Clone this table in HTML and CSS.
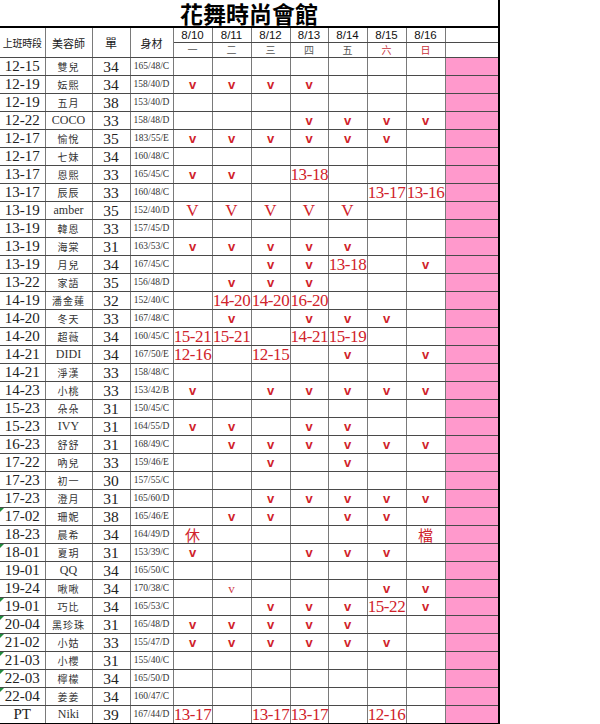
FILE: index.html
```html
<!DOCTYPE html>
<html lang="zh-Hant">
<head>
<meta charset="utf-8">
<title>花舞時尚會館</title>
<link rel="stylesheet" href="styles.css">
</head>
<body>
<table class="sheet">
  <colgroup>
    <col class="w-time"><col class="w-name"><col class="w-cup"><col class="w-size">
    <col class="w-day"><col class="w-day"><col class="w-day"><col class="w-day8">
    <col class="w-day"><col class="w-day"><col class="w-day"><col class="w-pink">
  </colgroup>
  <thead>
    <tr class="title-row"><th colspan="12" class="title">花舞時尚會館</th></tr>
    <tr class="hd1">
      <th rowspan="2" class="h-time">上班時段</th>
      <th rowspan="2" class="h-name">美容師</th>
      <th rowspan="2" class="h-cup">單</th>
      <th rowspan="2" class="h-size">身材</th>
      <th class="date">8/10</th><th class="date">8/11</th><th class="date">8/12</th><th class="date">8/13</th>
      <th class="date">8/14</th><th class="date">8/15</th><th class="date">8/16</th><th class="blank last"></th>
    </tr>
    <tr class="hd2">
      <th class="wd">一</th><th class="wd">二</th><th class="wd">三</th><th class="wd">四</th>
      <th class="wd">五</th><th class="wd red">六</th><th class="wd red">日</th><th class="blank last"></th>
    </tr>
  </thead>
  <tbody>
    <tr><td class="t">12-15</td><td class="n">雙兒</td><td class="c">34</td><td class="s">165/48/C</td><td></td><td></td><td></td><td></td><td></td><td></td><td></td><td class="p"></td></tr>
    <tr><td class="t">12-19</td><td class="n">妘熙</td><td class="c">34</td><td class="s">158/40/D</td><td><span class="v">v</span></td><td><span class="v">v</span></td><td><span class="v">v</span></td><td><span class="v">v</span></td><td></td><td></td><td></td><td class="p"></td></tr>
    <tr><td class="t">12-19</td><td class="n">五月</td><td class="c">38</td><td class="s">153/40/D</td><td></td><td></td><td></td><td></td><td></td><td></td><td></td><td class="p"></td></tr>
    <tr><td class="t">12-22</td><td class="n lat">COCO</td><td class="c">33</td><td class="s">158/48/D</td><td></td><td></td><td></td><td><span class="v">v</span></td><td><span class="v">v</span></td><td><span class="v">v</span></td><td><span class="v">v</span></td><td class="p"></td></tr>
    <tr><td class="t">12-17</td><td class="n">愉悅</td><td class="c">35</td><td class="s">183/55/E</td><td><span class="v">v</span></td><td><span class="v">v</span></td><td><span class="v">v</span></td><td><span class="v">v</span></td><td><span class="v">v</span></td><td><span class="v">v</span></td><td></td><td class="p"></td></tr>
    <tr><td class="t">12-17</td><td class="n">七妹</td><td class="c">34</td><td class="s">160/48/C</td><td></td><td></td><td></td><td></td><td></td><td></td><td></td><td class="p"></td></tr>
    <tr><td class="t">13-17</td><td class="n">恩熙</td><td class="c">33</td><td class="s">165/45/C</td><td><span class="v">v</span></td><td><span class="v">v</span></td><td></td><td><span class="r">13-18</span></td><td></td><td></td><td></td><td class="p"></td></tr>
    <tr><td class="t">13-17</td><td class="n">辰辰</td><td class="c">33</td><td class="s">160/48/C</td><td></td><td></td><td></td><td></td><td></td><td><span class="r">13-17</span></td><td><span class="r">13-16</span></td><td class="p"></td></tr>
    <tr><td class="t">13-19</td><td class="n lat">amber</td><td class="c">35</td><td class="s">152/40/D</td><td><span class="bigv">V</span></td><td><span class="bigv">V</span></td><td><span class="bigv">V</span></td><td><span class="bigv">V</span></td><td><span class="bigv">V</span></td><td></td><td></td><td class="p"></td></tr>
    <tr><td class="t">13-19</td><td class="n">韓恩</td><td class="c">33</td><td class="s">157/45/D</td><td></td><td></td><td></td><td></td><td></td><td></td><td></td><td class="p"></td></tr>
    <tr><td class="t">13-19</td><td class="n">海棠</td><td class="c">31</td><td class="s">163/53/C</td><td><span class="v">v</span></td><td><span class="v">v</span></td><td><span class="v">v</span></td><td><span class="v">v</span></td><td><span class="v">v</span></td><td></td><td></td><td class="p"></td></tr>
    <tr><td class="t">13-19</td><td class="n">月兒</td><td class="c">34</td><td class="s">167/45/C</td><td></td><td></td><td><span class="v">v</span></td><td><span class="v">v</span></td><td><span class="r">13-18</span></td><td></td><td><span class="v">v</span></td><td class="p"></td></tr>
    <tr><td class="t">13-22</td><td class="n">家語</td><td class="c">35</td><td class="s">156/48/D</td><td></td><td><span class="v">v</span></td><td><span class="v">v</span></td><td><span class="v">v</span></td><td></td><td></td><td></td><td class="p"></td></tr>
    <tr><td class="t">14-19</td><td class="n">潘金蓮</td><td class="c">32</td><td class="s">152/40/C</td><td></td><td><span class="r">14-20</span></td><td><span class="r">14-20</span></td><td><span class="r">16-20</span></td><td></td><td></td><td></td><td class="p"></td></tr>
    <tr><td class="t">14-20</td><td class="n">冬天</td><td class="c">33</td><td class="s">167/48/C</td><td></td><td><span class="v">v</span></td><td></td><td><span class="v">v</span></td><td><span class="v">v</span></td><td><span class="v">v</span></td><td></td><td class="p"></td></tr>
    <tr><td class="t">14-20</td><td class="n">超薇</td><td class="c">34</td><td class="s">160/45/C</td><td><span class="r">15-21</span></td><td><span class="r">15-21</span></td><td></td><td><span class="r">14-21</span></td><td><span class="r">15-19</span></td><td></td><td></td><td class="p"></td></tr>
    <tr><td class="t">14-21</td><td class="n lat">DIDI</td><td class="c">34</td><td class="s">167/50/E</td><td><span class="r">12-16</span></td><td></td><td><span class="r">12-15</span></td><td></td><td><span class="v">v</span></td><td></td><td><span class="v">v</span></td><td class="p"></td></tr>
    <tr><td class="t">14-21</td><td class="n">淨漢</td><td class="c">33</td><td class="s">158/48/C</td><td></td><td></td><td></td><td></td><td></td><td></td><td></td><td class="p"></td></tr>
    <tr><td class="t">14-23</td><td class="n">小桃</td><td class="c">33</td><td class="s">153/42/B</td><td><span class="v">v</span></td><td></td><td><span class="v">v</span></td><td><span class="v">v</span></td><td><span class="v">v</span></td><td><span class="v">v</span></td><td><span class="v">v</span></td><td class="p"></td></tr>
    <tr><td class="t">15-23</td><td class="n">朵朵</td><td class="c">31</td><td class="s">150/45/C</td><td></td><td></td><td></td><td></td><td></td><td></td><td></td><td class="p"></td></tr>
    <tr><td class="t">15-23</td><td class="n lat">IVY</td><td class="c">31</td><td class="s">164/55/D</td><td><span class="v">v</span></td><td><span class="v">v</span></td><td></td><td><span class="v">v</span></td><td><span class="v">v</span></td><td></td><td></td><td class="p"></td></tr>
    <tr><td class="t">16-23</td><td class="n">舒舒</td><td class="c">31</td><td class="s">168/49/C</td><td></td><td><span class="v">v</span></td><td><span class="v">v</span></td><td><span class="v">v</span></td><td><span class="v">v</span></td><td><span class="v">v</span></td><td><span class="v">v</span></td><td class="p"></td></tr>
    <tr><td class="t">17-22</td><td class="n">吶兒</td><td class="c">33</td><td class="s">159/46/E</td><td></td><td></td><td><span class="v">v</span></td><td></td><td><span class="v">v</span></td><td></td><td></td><td class="p"></td></tr>
    <tr><td class="t">17-23</td><td class="n">初一</td><td class="c">30</td><td class="s">157/55/C</td><td></td><td></td><td></td><td></td><td></td><td></td><td></td><td class="p"></td></tr>
    <tr><td class="t">17-23</td><td class="n">澄月</td><td class="c">31</td><td class="s">165/60/D</td><td></td><td></td><td><span class="v">v</span></td><td><span class="v">v</span></td><td><span class="v">v</span></td><td><span class="v">v</span></td><td><span class="v">v</span></td><td class="p"></td></tr>
    <tr><td class="t tri">17-02</td><td class="n">珊妮</td><td class="c">38</td><td class="s">165/46/E</td><td></td><td><span class="v">v</span></td><td><span class="v">v</span></td><td></td><td><span class="v">v</span></td><td><span class="v">v</span></td><td></td><td class="p"></td></tr>
    <tr><td class="t">18-23</td><td class="n">晨希</td><td class="c">34</td><td class="s">164/49/D</td><td><span class="k">休</span></td><td></td><td></td><td></td><td></td><td></td><td><span class="k">檔</span></td><td class="p"></td></tr>
    <tr><td class="t tri">18-01</td><td class="n">夏玥</td><td class="c">31</td><td class="s">153/39/C</td><td><span class="v">v</span></td><td></td><td></td><td><span class="v">v</span></td><td><span class="v">v</span></td><td><span class="v">v</span></td><td></td><td class="p"></td></tr>
    <tr><td class="t">19-01</td><td class="n lat">QQ</td><td class="c">34</td><td class="s">165/50/C</td><td></td><td></td><td></td><td></td><td></td><td></td><td></td><td class="p"></td></tr>
    <tr><td class="t">19-24</td><td class="n">啾啾</td><td class="c">34</td><td class="s">170/38/C</td><td></td><td><span class="thinv">v</span></td><td></td><td></td><td></td><td><span class="v">v</span></td><td><span class="v">v</span></td><td class="p"></td></tr>
    <tr><td class="t tri">19-01</td><td class="n">巧比</td><td class="c">34</td><td class="s">165/53/C</td><td></td><td></td><td><span class="v">v</span></td><td><span class="v">v</span></td><td><span class="v">v</span></td><td><span class="r">15-22</span></td><td><span class="v">v</span></td><td class="p"></td></tr>
    <tr><td class="t tri">20-04</td><td class="n">黑珍珠</td><td class="c">31</td><td class="s">165/48/D</td><td><span class="v">v</span></td><td><span class="v">v</span></td><td><span class="v">v</span></td><td><span class="v">v</span></td><td><span class="v">v</span></td><td></td><td></td><td class="p"></td></tr>
    <tr><td class="t tri">21-02</td><td class="n">小姑</td><td class="c">33</td><td class="s">155/47/D</td><td><span class="v">v</span></td><td><span class="v">v</span></td><td><span class="v">v</span></td><td><span class="v">v</span></td><td><span class="v">v</span></td><td><span class="v">v</span></td><td></td><td class="p"></td></tr>
    <tr><td class="t tri">21-03</td><td class="n">小櫻</td><td class="c">31</td><td class="s">155/40/C</td><td></td><td></td><td></td><td></td><td></td><td></td><td></td><td class="p"></td></tr>
    <tr><td class="t tri">22-03</td><td class="n">檸檬</td><td class="c">34</td><td class="s">165/50/D</td><td></td><td></td><td></td><td></td><td></td><td></td><td></td><td class="p"></td></tr>
    <tr><td class="t tri">22-04</td><td class="n">姜姜</td><td class="c">34</td><td class="s">160/47/C</td><td></td><td></td><td></td><td></td><td></td><td></td><td></td><td class="p"></td></tr>
    <tr class="last-row"><td class="t">PT</td><td class="n lat">Niki</td><td class="c">39</td><td class="s">167/44/D</td><td><span class="r">13-17</span></td><td></td><td><span class="r">13-17</span></td><td><span class="r">13-17</span></td><td></td><td><span class="r">12-16</span></td><td></td><td class="p"></td></tr>
  </tbody>
</table>
</body>
</html>
```

FILE: styles.css
```css
html, body {
  margin: 0;
  padding: 0;
  background: #ffffff;
}

.sheet {
  border-collapse: collapse;
  table-layout: fixed;
  width: 499px;
  font-family: "Liberation Serif", "Noto Sans CJK TC", serif;
  color: #222;
}

.w-time { width: 45px; }
.w-name { width: 47px; }
.w-cup { width: 38px; }
.w-size { width: 43px; }
.w-day { width: 39px; }
.w-day8 { width: 38px; }
.w-pink { width: 54px; }

.sheet th,
.sheet td {
  padding: 0;
  text-align: center;
  vertical-align: middle;
  white-space: nowrap;
  overflow: visible;
  border-left: 1px solid #7a7a7a;
  border-right: 1px solid #7a7a7a;
  border-top: 1px solid #4a4a4a;
  border-bottom: 1px solid #4a4a4a;
}

.sheet tr > :first-child {
  border-left: none;
}

.title-row { height: 27px; }

.sheet .title {
  border: none;
  border-right: 2px solid #000;
  border-bottom: 2px solid #000;
  font-family: "Noto Sans CJK TC", "Noto Sans", sans-serif;
  font-weight: 700;
  font-size: 23px;
  line-height: 25px;
  color: #000;
  padding: 0;
}

.hd1, .hd2 { height: 15px; }

.sheet th {
  font-weight: 400;
  color: #222;
  line-height: 14px;
}

.h-time {
  font-family: "Noto Sans CJK TC", sans-serif;
  font-size: 10px;
  letter-spacing: -0.3px;
}

.h-name, .h-size {
  font-family: "Noto Sans CJK TC", sans-serif;
  font-size: 11px;
}

.h-cup {
  font-family: "Noto Sans CJK TC", sans-serif;
  font-size: 12px;
}

.sheet .date {
  font-family: "Liberation Sans", Arial, sans-serif;
  font-size: 11.5px;
  line-height: 14px;
  color: #111;
}

.sheet .wd {
  font-family: "Noto Sans CJK TC", sans-serif;
  font-size: 10px;
  line-height: 14px;
  color: #555;
}

.sheet .wd.red { color: #c8323a; }

.sheet .last { border-right: 2px solid #000; }

tbody tr { height: 18px; }

.sheet tbody td {
  line-height: 17px;
  height: 17px;
}

.sheet td.t {
  font-size: 15px;
  color: #222;
  position: relative;
}

.tri::before {
  content: "";
  position: absolute;
  left: 0;
  top: 0;
  width: 0;
  height: 0;
  border-top: 4px solid #1f8a3c;
  border-right: 4px solid transparent;
}

.sheet td.n {
  font-family: "Noto Sans CJK TC", sans-serif;
  font-size: 10px;
  color: #333;
  letter-spacing: 1px;
}

.sheet td.n.lat {
  font-family: "Liberation Serif", serif;
  font-size: 12px;
  letter-spacing: 0;
}

.sheet td.c {
  font-size: 15.5px;
  color: #222;
}

.sheet td.s {
  font-size: 9.5px;
  color: #333;
}

.sheet .p {
  background: #ff99cc;
  border-right: 2px solid #000;
}

.sheet .last-row td { border-bottom: 2px solid #000; }

.v, .thinv, .bigv, .r, .k {
  display: inline-block;
  vertical-align: top;
  height: 17px;
  line-height: 17px;
}

.v {
  font-family: "Liberation Sans", Arial, sans-serif;
  font-weight: 700;
  font-size: 13px;
  color: #d0232b;
}

.thinv {
  font-family: "Liberation Serif", serif;
  font-size: 13px;
  color: #d04048;
}

.bigv {
  font-family: "Liberation Serif", serif;
  font-size: 17px;
  color: #d0232b;
}

.r {
  font-family: "Liberation Serif", serif;
  font-size: 17px;
  color: #d0232b;
  letter-spacing: -0.4px;
}

.k {
  font-family: "Noto Sans CJK TC", serif;
  font-size: 15px;
  color: #d0232b;
}
```
